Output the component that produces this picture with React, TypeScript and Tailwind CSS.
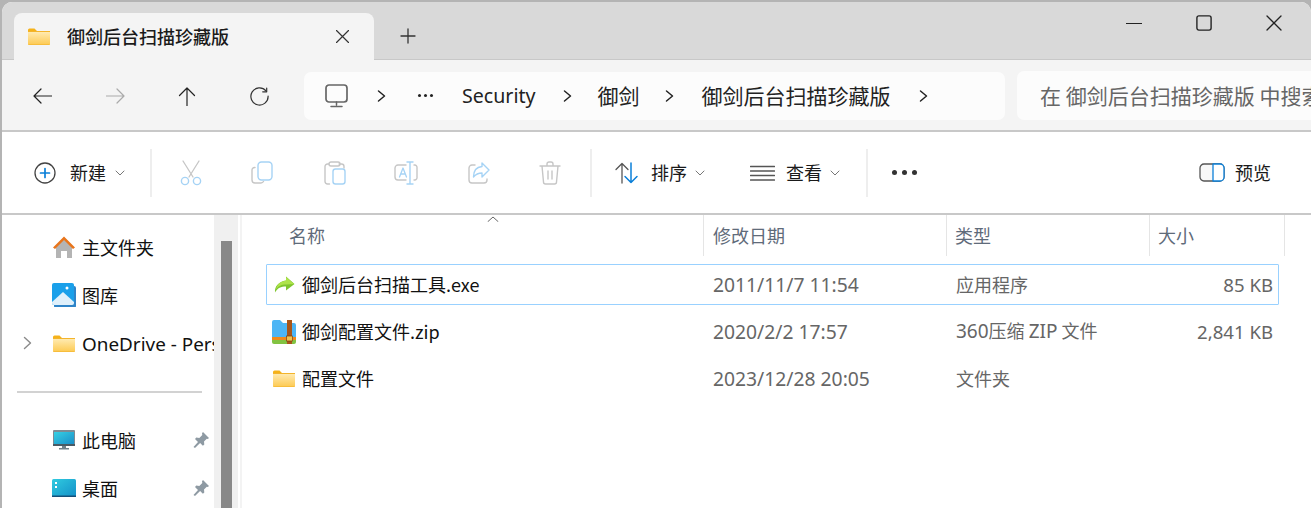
import React from "react";

const font = "font-['Noto_Sans_CJK_SC','Noto_Sans',sans-serif]";
const latin = "font-['Noto_Sans','Noto_Sans_CJK_SC',sans-serif]";

function Folder({ className = "" }: { className?: string }) {
  return (
    <svg viewBox="0 0 22 17" className={className}>
      <path d="M0 2a1.5 1.5 0 0 1 1.5-1.5h5L9 3h13v2H0z" fill="#f5b21a" />
      <rect x="0" y="3" width="22" height="14" rx="1" fill="#f3b42c" />
      <rect x="0" y="4" width="22" height="12.4" fill="url(#fg)" />
      <defs>
        <linearGradient id="fg" x1="0" y1="0" x2="0" y2="1">
          <stop offset="0" stopColor="#ffeab0" />
          <stop offset="1" stopColor="#fdcb55" />
        </linearGradient>
      </defs>
    </svg>
  );
}

function Stroke({ w, h, children, className = "" }: { w: number; h: number; children: React.ReactNode; className?: string }) {
  return (
    <svg width={w} height={h} viewBox={`0 0 ${w} ${h}`} fill="none" strokeLinecap="round" strokeLinejoin="round" className={className}>
      {children}
    </svg>
  );
}

function Chevron() {
  return (
    <Stroke w={9} h={14}>
      <path d="M1.5 2l6 5-6 5" stroke="#222" strokeWidth="1.5" />
    </Stroke>
  );
}

function Caret() {
  return (
    <Stroke w={10} h={6}>
      <path d="M1 1l4 4 4-4" stroke="#777" strokeWidth="1" />
    </Stroke>
  );
}

function Pin() {
  return (
    <svg width="16" height="16" viewBox="0 0 16 16">
      <path d="M10 0l6 6-1.200 1-1-.3-2.800 2.800.3 3-1.400 1.300-2.800-2.800L2 16l-1.500-1 4.500-5L2 7l1.300-1.400 3 .3L9.300 3 9 1.200z" fill="#8e9aa3" />
    </svg>
  );
}

function NavRow({ icon, label, pin, chevron }: { icon: React.ReactNode; label: React.ReactNode; pin?: boolean; chevron?: boolean }) {
  return (
    <div className="flex h-[24px] items-center w-[212px] overflow-hidden">
      <div className="w-[50px] shrink-0 pl-[21px]">
        {chevron && (
          <Stroke w={9} h={14}>
            <path d="M1.5 1.5l6 5.5-6 5.5" stroke="#8a8a8a" strokeWidth="1.4" />
          </Stroke>
        )}
      </div>
      <div className="w-[30px] shrink-0 flex items-center">{icon}</div>
      <span className="text-[18px] leading-[24px] text-[#111] whitespace-nowrap">{label}</span>
      {pin && (
        <span className="ml-auto mr-[5px]">
          <Pin />
        </span>
      )}
    </div>
  );
}

function Row({ icon, name, date, type, size, selected }: { icon: React.ReactNode; name: string; date: string; type: React.ReactNode; size: string; selected?: boolean }) {
  return (
    <div className={`flex h-[41px] items-center border rounded-[1px] ${selected ? "border-[#99d1ff]" : "border-transparent"}`}>
      <div className="w-[35px] shrink-0 flex justify-start pl-[5px]">{icon}</div>
      <div className="w-[411px] shrink-0 text-[18px] text-[#111] whitespace-nowrap">{name}</div>
      <div className={`w-[243px] shrink-0 pt-[1px] text-[19.3px] text-[#666] whitespace-nowrap ${latin}`}>{date}</div>
      <div className="w-[194px] shrink-0 text-[18px] text-[#666] whitespace-nowrap">{type}</div>
      <div className={`w-[123px] shrink-0 text-[18.6px] text-[#666] text-right whitespace-nowrap ${latin}`}>{size}</div>
    </div>
  );
}

export default function App() {
  return (
    <div className={`w-[1311px] h-[508px] overflow-hidden bg-[#b4b4b4] pl-[2px] pt-[2px] ${font}`}>
      <div className="w-[1309px] h-[506px] rounded-tl-[10px] rounded-tr-[10px] overflow-hidden bg-white flex flex-col">
        {/* Title bar */}
        <div className="h-[58px] shrink-0 bg-[#d9d9d9] border-b border-[#c8c8c8] flex items-end pl-[12px]">
          <div className="w-[360px] h-[47px] bg-[#f4f4f4] rounded-t-[8px] flex items-center pl-[14px] pb-[1px] -mb-px">
            <Folder className="w-[22px] h-[17px]" />
            <span className="ml-[17px] text-[18px] font-medium text-[#1a1a1a]">御剑后台扫描珍藏版</span>
            <Stroke w={13} h={13} className="ml-auto mr-[25px]">
              <path d="M.5.5l12 12M12.5.5l-12 12" stroke="#333" strokeWidth="1.2" />
            </Stroke>
          </div>
          <div className="h-[47px] flex items-center pl-[26px]">
            <Stroke w={16} h={16}>
              <path d="M8 1v14M1 8h14" stroke="#333" strokeWidth="1.3" />
            </Stroke>
          </div>
          <div className="ml-auto self-start flex items-center h-[42px] pr-[29px] gap-[54px]">
            <Stroke w={16} h={16}>
              <path d="M.5 8.500h15" stroke="#222" strokeWidth="1.2" />
            </Stroke>
            <Stroke w={16} h={16}>
              <rect x=".9" y=".9" width="14.200" height="14.200" rx="2" stroke="#222" strokeWidth="1.4" />
            </Stroke>
            <Stroke w={16} h={16}>
              <path d="M1 1l14 14M15 1L1 15" stroke="#222" strokeWidth="1.3" />
            </Stroke>
          </div>
        </div>

        {/* Address bar */}
        <div className="h-[72px] shrink-0 bg-[#f4f4f4] border-b-2 border-[#c8c8c8] flex items-center">
          <div className="w-[302px] shrink-0 flex items-center pl-[31px] pt-[2px]">
            <Stroke w={19} h={16}>
              <path d="M19 8H1M8 1L1 8l7 7" stroke="#222" strokeWidth="1.2" />
            </Stroke>
            <Stroke w={19} h={16} className="ml-[54px]">
              <path d="M0 8h18M11 1l7 7-7 7" stroke="#aaa" strokeWidth="1.2" />
            </Stroke>
            <Stroke w={18} h={19} className="ml-[53px]">
              <path d="M9 19V1M1.500 8.500L9 1l7.500 7.500" stroke="#222" strokeWidth="1.2" />
            </Stroke>
            <Stroke w={19} h={19} className="ml-[54px]">
              <path d="M16 3.800A8.600 8.600 0 1 0 18.100 9" stroke="#333" strokeWidth="1.2" />
              <path d="M16.700 1v3.800h-4" stroke="#333" strokeWidth="1.2" />
            </Stroke>
          </div>
          <div className="w-[701px] h-[48px] mt-[2px] shrink-0 bg-[#fcfcfc] rounded-[7px] flex items-center text-[21px] text-[#222]">
            <Stroke w={23} h={24} className="ml-[21px] -mt-[1px]">
              <rect x="1" y="1" width="21" height="17" rx="3" stroke="#666" strokeWidth="1.7" />
              <path d="M11.500 18v3M6 22.500h11" stroke="#666" strokeWidth="1.500" />
            </Stroke>
            <span className="ml-[29px] flex"><Chevron /></span>
            <span className="ml-[32px] flex gap-[3px] -mt-[2px]">
              <i className="w-[3px] h-[3px] rounded-full bg-[#222]" />
              <i className="w-[3px] h-[3px] rounded-full bg-[#222]" />
              <i className="w-[3px] h-[3px] rounded-full bg-[#222]" />
            </span>
            <span className={`ml-[29px] text-[19.6px] ${latin}`}>Security</span>
            <span className="ml-[27px] flex"><Chevron /></span>
            <span className="ml-[26px]">御剑</span>
            <span className="ml-[25px] flex"><Chevron /></span>
            <span className="ml-[28px]">御剑后台扫描珍藏版</span>
            <span className="ml-[28px] flex"><Chevron /></span>
          </div>
          <div className="ml-[12px] flex-1 h-[49px] mt-[1px] bg-[#fcfcfc] rounded-l-[7px] flex items-center pl-[23px] overflow-hidden text-[21px] text-[#666] whitespace-nowrap">
            在 御剑后台扫描珍藏版 中搜索
          </div>
        </div>

        {/* Toolbar */}
        <div className="h-[83px] shrink-0 bg-white border-b-2 border-[#c8c8c8] flex items-center">
          <div className="flex items-center w-[148px] pl-[32px]">
            <Stroke w={22} h={24}>
              <circle cx="11" cy="12" r="10" stroke="#444" strokeWidth="1.300" />
              <path d="M11 7.500v9M6.500 12h9" stroke="#0a7fd8" strokeWidth="1.700" />
            </Stroke>
            <span className="ml-[14px] text-[18px] text-[#1a1a1a]">新建</span>
            <span className="ml-[9px] flex"><Caret /></span>
          </div>
          <div className="w-[2px] h-[48px] bg-[#eeeeee]" />
          <div className="flex items-center h-[48px] w-[438px] pl-[27px]">
            <Stroke w={24} h={26}>
              <path d="M4 1l10 16M20 1L10 17" stroke="#c6c6c6" strokeWidth="1.300" />
              <circle cx="6" cy="21" r="3.600" stroke="#a6d3f5" strokeWidth="1.400" />
              <circle cx="18" cy="21" r="3.600" stroke="#a6d3f5" strokeWidth="1.400" />
            </Stroke>
            <Stroke w={22} h={24} className="ml-[48px]">
              <path d="M4 6.500h-.5a2.500 2.500 0 0 0-2.500 2.500v10a3 3 0 0 0 3 3h6a3 3 0 0 0 2.500-1.500" stroke="#c6c6c6" strokeWidth="1.400" />
              <rect x="7" y="1" width="14" height="18" rx="3.500" stroke="#a6d3f5" strokeWidth="1.400" />
            </Stroke>
            <Stroke w={22} h={24} className="ml-[51px]">
              <path d="M5 3H3.500A2.500 2.500 0 0 0 1 5.500v15A2.500 2.500 0 0 0 3.500 23h2M15 3h2.500A2.500 2.500 0 0 1 20 5.500V7" stroke="#c6c6c6" strokeWidth="1.400" />
              <rect x="5" y="1" width="11" height="4" rx="2" stroke="#c6c6c6" strokeWidth="1.400" />
              <rect x="9" y="8" width="12" height="15" rx="2.500" stroke="#a6d3f5" strokeWidth="1.400" />
            </Stroke>
            <Stroke w={24} h={24} className="ml-[48px]">
              <path d="M12 4H4a3 3 0 0 0-3 3v9a3 3 0 0 0 3 3h8M20 4h1a2.500 2.500 0 0 1 2 3v9a2.500 2.500 0 0 1-2 3h-1" stroke="#c6c6c6" strokeWidth="1.400" />
              <path d="M16 1v22M13 1h6M13 23h6" stroke="#a6d3f5" strokeWidth="1.400" />
              <path d="M5.500 16l3.500-9 3.500 9M6.800 13h4.400" stroke="#a6d3f5" strokeWidth="1.300" />
            </Stroke>
            <Stroke w={22} h={24} className="ml-[50px]">
              <path d="M7 4H4a3 3 0 0 0-3 3v12a3 3 0 0 0 3 3h12a3 3 0 0 0 3-3v-1" stroke="#c6c6c6" strokeWidth="1.400" />
              <path d="M14 2l7 7-7 7v-4c-4 0-6 1-8.500 4 0-6 3-10 8.500-10.500z" stroke="#a6d3f5" strokeWidth="1.400" />
            </Stroke>
            <Stroke w={22} h={24} className="ml-[49px]">
              <path d="M1 5h20M8 5V3a2 2 0 0 1 2-2h2a2 2 0 0 1 2 2v2M3 5l1.500 16a2 2 0 0 0 2 2h9a2 2 0 0 0 2-2L19 5M9 10v8M13 10v8" stroke="#c6c6c6" strokeWidth="1.400" />
            </Stroke>
          </div>
          <div className="w-[2px] h-[48px] bg-[#eeeeee]" />
          <div className="flex items-center w-[274px] pl-[23px]">
            <Stroke w={25} h={22}>
              <path d="M7 21V1.500M1 7.500l6-6 6 6" stroke="#555" strokeWidth="1.300" />
              <path d="M16 1v19.500M10 14.500l6 6 6-6" stroke="#0a7fd8" strokeWidth="1.500" />
            </Stroke>
            <span className="ml-[11px] text-[18px] text-[#1a1a1a]">排序</span>
            <span className="ml-[8px] flex"><Caret /></span>
            <Stroke w={25} h={16} className="ml-[45px]">
              <path d="M.5 1.500h24M.5 6h24M.5 10.500h24M.5 15h24" stroke="#555" strokeWidth="1.300" />
            </Stroke>
            <span className="ml-[11px] text-[18px] text-[#1a1a1a]">查看</span>
            <span className="ml-[8px] flex"><Caret /></span>
          </div>
          <div className="w-[2px] h-[48px] bg-[#eeeeee]" />
          <div className="ml-[24px] flex gap-[5px]">
            <i className="w-[5px] h-[5px] rounded-full bg-[#333]" />
            <i className="w-[5px] h-[5px] rounded-full bg-[#333]" />
            <i className="w-[5px] h-[5px] rounded-full bg-[#333]" />
          </div>
          <div className="ml-auto flex items-center pr-[40px]">
            <Stroke w={26} h={19}>
              <rect x="1" y="1" width="24" height="17" rx="4" fill="#f8f8f8" stroke="#555" strokeWidth="1.300" />
              <path d="M14 1h7a4 4 0 0 1 4 4v9a4 4 0 0 1-4 4h-7z" fill="#fff" stroke="#0a7fd8" strokeWidth="1.300" />
            </Stroke>
            <span className="ml-[10px] text-[18px] text-[#1a1a1a]">预览</span>
          </div>
        </div>

        {/* Body */}
        <div className="flex flex-1 min-h-0">
          {/* Sidebar */}
          <div className="w-[212px] shrink-0 flex flex-col pt-[20px]">
            <NavRow
              label="主文件夹"
              icon={
                <svg width="24" height="24" viewBox="0 0 24 24">
                  <path d="M4 11.500L12 4l8 7.500V23h-5v-7H9v7H4z" fill="#b4b4b4" />
                  <path d="M1 12.500L12 1.500l11 11-2 1.500-9-9-9 9z" fill="#e8751c" />
                </svg>
              }
            />
            <div className="h-[24px] mt-[24px]">
              <NavRow
                label="图库"
                icon={
                  <svg width="24" height="25" viewBox="0 0 24 25">
                    <rect x="2" y="3" width="22" height="22" rx="2" fill="#2f84c8" />
                    <rect x="0" y="0" width="22" height="22" rx="2" fill="#1aa0ea" />
                    <path d="M0 19l11-10 11 10v1a2 2 0 0 1-2 2H2a2 2 0 0 1-2-2z" fill="#dff0fb" />
                    <circle cx="15" cy="5" r="1.500" fill="#fff" />
                  </svg>
                }
              />
            </div>
            <div className="h-[24px] mt-[24px]">
              <NavRow
                chevron
                label={<span className={`text-[18.9px] ${latin}`}>OneDrive - Personal</span>}
                icon={<Folder className="w-[22px] h-[17px] ml-[1px]" />}
              />
            </div>
            <div className="ml-[15px] w-[185px] h-[2px] bg-[#d2d2d2] mt-[36px]" />
            <div className="h-[24px] mt-[35px]">
              <NavRow
                pin
                label="此电脑"
                icon={
                  <svg width="24" height="20" viewBox="0 0 24 20" className="ml-[1px]">
                    <defs>
                      <linearGradient id="mon" x1="0" y1="0" x2="1" y2="1">
                        <stop offset="0" stopColor="#35d0e4" />
                        <stop offset="1" stopColor="#1a8ec8" />
                      </linearGradient>
                    </defs>
                    <rect x="0" y="0" width="22" height="16" rx="1" fill="#7d8b94" />
                    <rect x="1" y="2" width="20" height="12" fill="url(#mon)" />
                    <rect x="0" y="14" width="22" height="2" fill="#4a5a64" />
                    <rect x="9" y="16" width="4" height="2" fill="#70808a" />
                    <rect x="6" y="18" width="10" height="1.500" fill="#70808a" />
                  </svg>
                }
              />
            </div>
            <div className="h-[24px] mt-[24px]">
              <NavRow
                pin
                label="桌面"
                icon={
                  <svg width="24" height="18" viewBox="0 0 24 18">
                    <defs>
                      <linearGradient id="dsk" x1="0" y1="0" x2="1" y2="1">
                        <stop offset="0" stopColor="#30cbe0" />
                        <stop offset="1" stopColor="#1490c8" />
                      </linearGradient>
                    </defs>
                    <rect x="0" y="0" width="24" height="18" rx="1.500" fill="url(#dsk)" />
                    <rect x="3" y="3" width="2" height="2" fill="#fff" />
                    <rect x="3" y="7" width="2" height="2" fill="#fff" />
                    <rect x="0" y="16.500" width="24" height="1.500" fill="#14507a" />
                  </svg>
                }
              />
            </div>
          </div>

          {/* Scrollbar */}
          <div className="w-[24px] shrink-0 bg-[#f0f0f0] pl-[7px] pt-[26px]">
            <div className="w-[11px] h-[300px] bg-[#888888]" />
          </div>
          <div className="w-[4px] shrink-0 border-r-[2px] border-[#f3f3f3]" />

          {/* Main */}
          <div className="flex-1 min-w-0 relative pl-[25px]">
            <Stroke w={12} h={6} className="absolute left-[245px] top-[1px]">
              <path d="M1 5.500L6 1l5 4.500" stroke="#666" strokeWidth="1" />
            </Stroke>
            <div className="flex h-[41px] text-[18px] text-[#5f6b7a]">
              <div className="w-[437px] shrink-0 border-r border-[#e5e5e5] pl-[22px] flex items-center pb-[1px]">名称</div>
              <div className="w-[243px] shrink-0 border-r border-[#e5e5e5] pl-[9px] flex items-center pb-[1px]">修改日期</div>
              <div className="w-[203px] shrink-0 border-r border-[#e5e5e5] pl-[8px] flex items-center pb-[1px]">类型</div>
              <div className="w-[135px] shrink-0 border-r border-[#e5e5e5] pl-[8px] flex items-center pb-[1px]">大小</div>
            </div>
            <div className="mt-[8px] -ml-[1px] w-[1013px] flex flex-col gap-[6px]">
              <Row
                selected
                name="御剑后台扫描工具.exe"
                date="2011/11/7 11:54"
                type="应用程序"
                size="85 KB"
                icon={
                  <svg width="21" height="17" viewBox="0 0 21 17" className="ml-[2px]">
                    <path d="M12 .5l8.500 7.500-8.500 6.500v-4C7 10.500 3.500 12 1 16.500c-.5-6 3.500-11 11-12z" fill="#7fc52e" />
                    <path d="M12 1l8 7-8 .5c-5 0-8 2-10 5 1-5 4-8 10-9z" fill="#aee34a" />
                  </svg>
                }
              />
              <Row
                name="御剑配置文件.zip"
                date="2020/2/2 17:57"
                type={<><span className={`text-[19px] ${latin}`}>360</span>压缩 <span className={`text-[19px] ${latin}`}>ZIP</span> 文件</>}
                size="2,841 KB"
                icon={
                  <svg width="24" height="24" viewBox="0 0 24 24">
                    <path d="M0 2a2 2 0 0 1 2-2h6l3 3h11a2 2 0 0 1 2 2v12H0z" fill="#4db5f5" />
                    <rect x="0" y="17" width="24" height="3" fill="#f08a1c" />
                    <path d="M0 20h24v2a2 2 0 0 1-2 2H2a2 2 0 0 1-2-2z" fill="#82c341" />
                    <rect x="15" y="0" width="5" height="24" fill="#a9561a" />
                    <rect x="14.500" y="16" width="6" height="5" fill="#f2c14e" stroke="#7a3e10" strokeWidth=".7" />
                  </svg>
                }
              />
              <Row name="配置文件" date="2023/12/28 20:05" type="文件夹" size="" icon={<Folder className="w-[22px] h-[17px] ml-[1px]" />} />
            </div>
          </div>
        </div>
      </div>
    </div>
  );
}
